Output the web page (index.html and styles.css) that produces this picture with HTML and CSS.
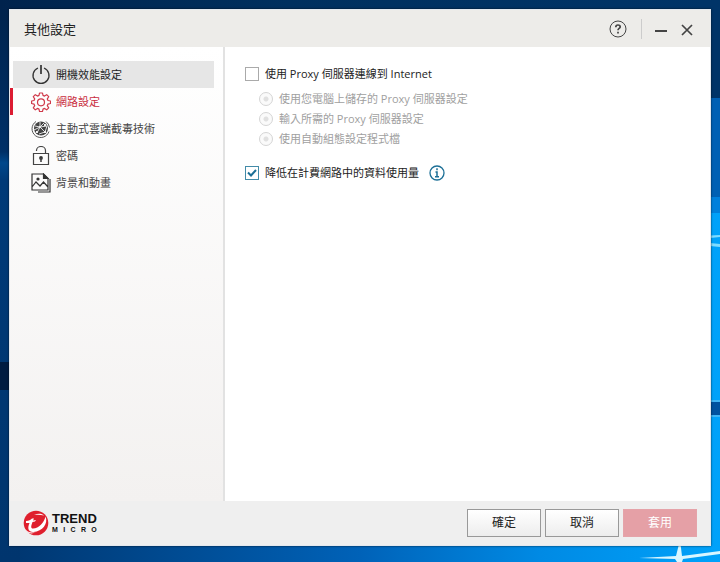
FILE: index.html
```html
<!DOCTYPE html>
<html lang="zh-Hant">
<head>
    <meta charset="UTF-8">
    <meta name="viewport" content="width=device-width, initial-scale=1.0">
    <title>其他設定</title>
    <link rel="stylesheet" href="styles.css">
</head>
<body>
    <!-- Desktop wallpaper -->
    <svg class="wallpaper" viewBox="0 0 720 562" preserveAspectRatio="none" aria-hidden="true">
        <defs>
            <linearGradient id="sky" x1="0" y1="0" x2="1" y2="0">
                <stop offset="0" stop-color="#00356e"/>
                <stop offset="0.5" stop-color="#0062b8"/>
                <stop offset="0.75" stop-color="#008ae4"/>
                <stop offset="1" stop-color="#00a2fa"/>
            </linearGradient>
            <linearGradient id="left" x1="0" y1="0" x2="0" y2="1">
                <stop offset="0" stop-color="#00234d"/>
                <stop offset="0.27" stop-color="#003067"/>
                <stop offset="0.29" stop-color="#00488c"/>
                <stop offset="0.32" stop-color="#003a78"/>
                <stop offset="1" stop-color="#00356e"/>
            </linearGradient>
            <linearGradient id="top" x1="0" y1="0" x2="1" y2="0">
                <stop offset="0" stop-color="#00234d"/>
                <stop offset="0.4" stop-color="#00305f"/>
                <stop offset="1" stop-color="#003468"/>
            </linearGradient>
        </defs>
        <rect width="720" height="562" fill="url(#sky)"/>
        <rect width="20" height="562" fill="url(#left)"/>
        <path d="M0 362h20v28H0z" fill="#001c42"/>
        <path d="M0 0h720v20H0z" fill="url(#top)"/>
        <path d="M700 0h20v98h-20z" fill="#003468"/>
        <path d="M700 98h20v99h-20z" fill="#0060b4"/>
        <path d="M700 197h20v16h-20z" fill="#0080dc"/>
        <path d="M700 236l20-1v2l-20 2zM700 242l20 2v3l-20-2z" fill="#7fdcff"/>
        <path d="M700 400h20v2h-20zM700 415h20v2h-20z" fill="#3fb4f4"/>
        <path d="M700 402h20v13h-20z" fill="#0052a0"/>
        <path d="M680 540l2 16 38-5v3l-37 5-1 3h-5l-2-3-36-1 37-2z" fill="#d8f6ff"/>
    </svg>

    <main class="window">
        <header class="titlebar">
            <h1>其他設定</h1>
            <div class="window-actions">
                <button type="button" class="icon-button help" aria-label="說明">
                    <svg width="18" height="18" viewBox="0 0 18 18" fill="none" stroke="#444">
                        <circle cx="9" cy="9" r="8"/>
                        <path d="M6.800 7.200c0-1.500 1-2.200 2.200-2.200s2.200.7 2.200 1.900c0 1.500-2.200 1.600-2.200 3.300M9 11.700v1.800" stroke-width="1.700"/>
                    </svg>
                </button>
                <button type="button" class="icon-button minimize" aria-label="最小化">
                    <svg width="14" height="14" viewBox="0 0 14 14" stroke="#444" stroke-width="2">
                        <path d="M1 9h12"/>
                    </svg>
                </button>
                <button type="button" class="icon-button" aria-label="關閉">
                    <svg width="14" height="14" viewBox="0 0 14 14" stroke="#444" stroke-width="1.700">
                        <path d="M2 3l10 10M12 3L2 13"/>
                    </svg>
                </button>
            </div>
        </header>

        <div class="content">
            <nav class="sidebar">
                <a href="#startup" class="hovered">
                    <svg width="20" height="20" viewBox="0 0 20 20" fill="none" stroke="#333" stroke-width="1.300">
                        <path d="M7 3A8 8 0 1 0 13 3"/>
                        <path d="M10 0v9" stroke-width="1.700"/>
                    </svg>
                    開機效能設定
                </a>
                <a href="#network" class="active">
                    <svg width="20" height="20" viewBox="0 0 20 20" fill="none" stroke="#d0394a" stroke-width="1.200" stroke-linejoin="round">
                        <path d="M8.500 1h3l.5 2.400 1.500.7 2.200-1.400 2 2-1.400 2.200.7 1.600 2.500.5v2.500l-2.500.6-.7 1.600 1.400 2.100-2 2-2.200-1.400-1.500.7-.5 2.400h-3L8 17.100l-1.500-.7-2.200 1.400-2-2 1.400-2.100-.7-1.600L.6 11.500V9L3 8.500l.7-1.600-1.400-2.200 2-2 2.200 1.400L8 3.400z"/>
                        <circle cx="10" cy="10.300" r="3.500"/>
                    </svg>
                    網路設定
                </a>
                <a href="#cloud">
                    <svg width="20" height="20" viewBox="0 0 20 20" fill="none" stroke="#444">
                        <path d="M5 2.500a8.700 8.700 0 1 0 13 10M15 2.500a8.700 8.700 0 0 1 3.500 6" stroke-width="0.900"/>
                        <circle cx="10" cy="9.500" r="7" fill="#444" stroke="none"/>
                        <path d="M4 7l5 1 5 5M6 14l3-6 4-4M3 11l6-3M9 8l0-5M14 13l2-6-7 1M14 13l-6 2" stroke="#eee" stroke-width="0.900"/>
                        <path d="M8 7h2v2H8zM13 12h2v2h-2zM5 12h2v2H5zM13 5h2v2h-2z" fill="#eee" stroke="none"/>
                    </svg>
                    主動式雲端截毒技術
                </a>
                <a href="#password">
                    <svg width="20" height="20" viewBox="0 0 20 20" fill="none" stroke="#444" stroke-width="1.200">
                        <path d="M2.500 7.500h15v11h-15zM5.500 5V4.500a4.500 4 0 0 1 9 0v3"/>
                        <circle cx="10" cy="12" r="1.900" fill="#333" stroke="none"/>
                        <path d="M10 12v4" stroke-width="1.600"/>
                    </svg>
                    密碼
                </a>
                <a href="#background">
                    <svg width="20" height="20" viewBox="0 0 20 20" fill="none" stroke="#333" stroke-width="1.200">
                        <path d="M12.500 1H1v16h16V5.500zM1 14l4-5 4 4 3.500-4L17 14M19 6v13H7"/>
                        <path d="M12.500 1v4.500H17z" fill="#333"/>
                        <circle cx="7" cy="6" r="1.600" fill="#333" stroke="none"/>
                    </svg>
                    背景和動畫
                </a>
            </nav>

            <form class="settings" id="settingsForm">
                <div class="option">
                    <input type="checkbox" id="useProxy">
                    <label for="useProxy">使用 Proxy 伺服器連線到 Internet</label>
                </div>
                <div class="proxy-options">
                    <div class="option">
                        <input type="radio" name="proxy" id="proxySystem" disabled>
                        <label for="proxySystem">使用您電腦上儲存的 Proxy 伺服器設定</label>
                    </div>
                    <div class="option">
                        <input type="radio" name="proxy" id="proxyManual" disabled>
                        <label for="proxyManual">輸入所需的 Proxy 伺服器設定</label>
                    </div>
                    <div class="option">
                        <input type="radio" name="proxy" id="proxyScript" disabled>
                        <label for="proxyScript">使用自動組態設定程式檔</label>
                    </div>
                </div>
                <div class="option">
                    <input type="checkbox" id="meteredNetwork" checked>
                    <label for="meteredNetwork">降低在計費網路中的資料使用量</label>
                    <svg class="info" width="16" height="16" viewBox="0 0 16 16" fill="none" stroke="#1c6f96">
                        <circle cx="8" cy="8" r="7" stroke-width="1.300"/>
                        <path d="M8 3.300v2M6.500 7H8v4.500M6 11.800h4" stroke-width="1.500"/>
                    </svg>
                </div>
            </form>
        </div>

        <footer class="footer">
            <div class="logo">
                <svg width="26" height="26" viewBox="0 0 26 26">
                    <circle cx="13" cy="13" r="12.300" fill="#df1f2d"/>
                    <path d="M3 11c3 0 4.500-1 6-2.500l2 0-1 2 3-.5-1 1.500-2.500.5c-1.500 4-2 6.500.5 6.500 6 0 11-6 12.500-12 3 7-3 15-12 15.500-5 .3-6.500-3.500-4-9L3 13z" fill="#fff"/>
                    <path d="M1 17c2 5 7 6.500 12 5-5 3-10 1-12-5z" fill="#fff"/>
                    <path d="M11 5c4-2 8-1.500 10 .5-3-.7-6-1-10-.5z" fill="#fff"/>
                </svg>
                <div class="logo-text">
                    <strong>TREND</strong>
                    <span class="logo-micro"><span>M</span><span>I</span><span>C</span><span>R</span><span>O</span></span>
                </div>
            </div>
            <div class="buttons">
                <button type="submit" form="settingsForm">確定</button>
                <button type="button">取消</button>
                <button type="button" class="apply" disabled>套用</button>
            </div>
        </footer>
    </main>
</body>
</html>
```
FILE: styles.css
```css
* {
    box-sizing: border-box;
}
body {
    display: flex;
    min-height: 100vh;
    margin: 0;
    padding: 9px 9px 16px;
    background-color: #003a78;
    color: #222;
    font-family: "Open Sans", "Noto Sans CJK TC", sans-serif;
    font-size: 11px;
    line-height: 16px;
}
.wallpaper {
    position: absolute;
    inset: 0;
    width: 100%;
    height: 100%;
    z-index: -1;
}
.window {
    display: flex;
    flex-direction: column;
    flex: 1;
    border: 1px solid #e4e8ee;
    background-color: white;
    box-shadow: 0 0 2px rgba(0, 0, 0, 0.7);
}
.titlebar {
    display: flex;
    align-items: center;
    justify-content: space-between;
    height: 37px;
    padding: 0 16px 0 14px;
    background-color: #edece9;
}
h1 {
    margin: 0;
    font-size: 13px;
    font-weight: normal;
}
.window-actions {
    display: flex;
    align-items: center;
    gap: 12px;
}
.icon-button {
    display: flex;
    padding: 0;
    border: none;
    background: none;
    cursor: pointer;
}
.minimize {
    padding: 3px 0 3px 12px;
    border-left: 1px solid #ccc;
}
.help {
    margin-right: 2px;
}

.content {
    display: flex;
    flex: 1;
}
.sidebar {
    width: 215px;
    padding-top: 14px;
    border-right: 2px solid #e2e2e2;
    background: linear-gradient(white, #f3f1f0);
}
.sidebar a {
    display: flex;
    align-items: center;
    gap: 5px;
    height: 27px;
    margin-right: 9px;
    padding-left: 18px;
    border-left: 3px solid transparent;
    background-clip: padding-box;
    color: #444;
    text-decoration: none;
}
.sidebar .hovered {
    background-color: #e6e6e6;
    color: #222;
}
.sidebar .active {
    border-left-color: #dc1c32;
    color: #c92d40;
}

.settings {
    flex: 1;
    padding: 17px 20px;
}
.option {
    display: flex;
    align-items: center;
    gap: 6px;
    height: 20px;
}
.proxy-options {
    margin: 5px 0 14px 14px;
    color: #a0a0a0;
}
.option input {
    flex: none;
    width: 14px;
    height: 14px;
    margin: 0;
    appearance: none;
    border: 1px solid #aaa;
    background: white center no-repeat;
}
.option input:checked {
    border-color: #438ba8;
    background-image: url("data:image/svg+xml,%3Csvg xmlns='http://www.w3.org/2000/svg' width='12' height='12' fill='none' stroke='%231c6f96' stroke-width='2'%3E%3Cpath d='M2 5.500l3 3 5-5.500'/%3E%3C/svg%3E");
}
.option input[type="radio"] {
    border-color: #d4d4d4;
    border-radius: 50%;
    background: radial-gradient(circle, #e0e0e0 2px, #fafafa 3px);
}
.info {
    margin-left: 4px;
}

.footer {
    display: flex;
    align-items: center;
    justify-content: space-between;
    height: 44px;
    padding: 0 13px;
    background-color: #efefef;
}
.logo {
    display: flex;
    align-items: center;
    gap: 3px;
    color: #111;
    font-family: "Liberation Sans", Arial, sans-serif;
}
.logo-text {
    display: flex;
    flex-direction: column;
}
.logo-text strong {
    font-size: 13px;
    line-height: 14px;
}
.logo-micro {
    display: flex;
    justify-content: space-between;
    font-size: 7px;
    font-weight: bold;
    line-height: 8px;
}
.buttons {
    display: flex;
    gap: 4px;
}
.buttons button {
    width: 74px;
    height: 28px;
    padding: 0;
    border: 1px solid #999;
    background: linear-gradient(white, #ededed);
    color: #222;
    font: inherit;
    font-size: 12px;
    cursor: pointer;
}
.buttons .apply {
    border-color: #e5a3a9;
    background: #e5a0a6;
    color: white;
    cursor: default;
}
```
